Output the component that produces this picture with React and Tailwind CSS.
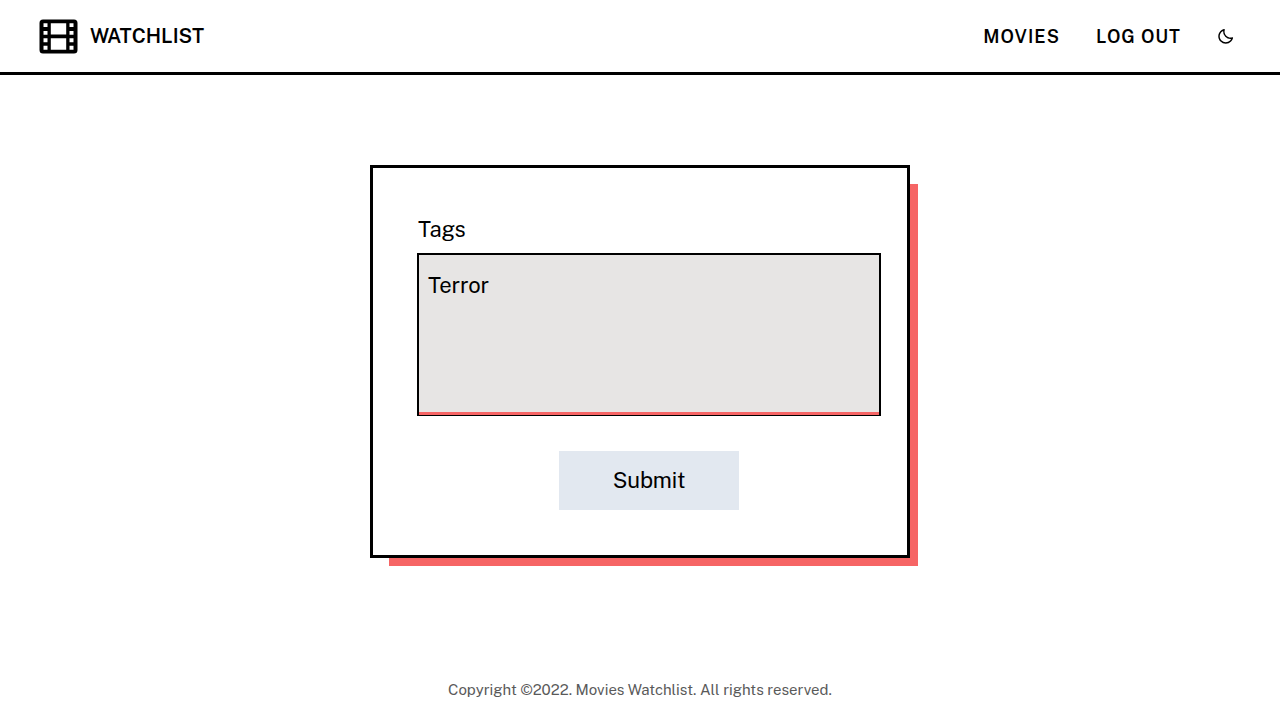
import { BiMoon } from "react-icons/bi";

function FilmIcon() {
  return (
    <svg viewBox="-0.5 -0.5 39 35" className="h-[35px] w-[39px]" aria-hidden="true">
      <path
        fill="currentColor"
        fillRule="evenodd"
        d="M3.5 0H34.5A3.5 3.5 0 0 1 38 3.5V30.5A3.5 3.5 0 0 1 34.5 34H3.5A3.5 3.5 0 0 1 0 30.5V3.5A3.5 3.5 0 0 1 3.5 0ZM11.3 3.8V15H26.7V3.8ZM11.3 18.8V30.2H26.7V18.8ZM4 3.8V7.6H8V3.8ZM4 11.4V15.2H8V11.4ZM4 18.8V22.7H8V18.8ZM4 26.3V30.2H8V26.3ZM30 3.8V7.6H34V3.8ZM30 11.4V15.2H34V11.4ZM30 18.8V22.7H34V18.8ZM30 26.3V30.2H34V26.3Z"
      />
    </svg>
  );
}

export default function App() {
  return (
    <div className="flex h-[720px] flex-col overflow-hidden bg-white font-['Public_Sans','Inter',sans-serif] text-black">
      <header className="flex h-[75px] shrink-0 items-center justify-between border-b-[3px] border-black pr-[45px] pl-[39px]">
        <div className="flex items-center">
          <FilmIcon />
          <span className="ml-3 text-[20px] font-semibold">WATCHLIST</span>
        </div>
        <nav className="flex items-center text-[18px] font-semibold tracking-[1px]">
          <a>MOVIES</a>
          <a className="ml-9">LOG OUT</a>
          <span className="ml-9 pt-px">
            <BiMoon className="size-[18px]" viewBox="0.6 0.6 24 24" />
          </span>
        </nav>
      </header>
      <main className="flex flex-1 flex-col items-center pt-[90px]">
        <form className="h-[393px] w-[540px] border-[3px] border-black bg-white pt-[45px] pl-[44px] shadow-[13.5px_13.5px_0_-5.5px_#f66565]">
          <label className="block h-[40px] pl-px text-[22px] leading-[33px] tracking-[-0.2px]">Tags</label>
          <div className="h-[163px] w-[464px] border-2 border-b border-black bg-[#e7e5e4]">
            <div className="h-40 border-b-[3px] border-[#f66565] px-[9px] pt-[14px] text-[22px] leading-[33px] tracking-[-0.2px]">Terror</div>
          </div>
          <button type="button" className="mt-[35px] ml-[142px] h-[59px] w-[180px] bg-[#e2e8f0] text-[22px] tracking-[-0.2px]">Submit</button>
        </form>
      </main>
      <footer className="h-[41px] text-center text-[15px] text-[#5a5a5a]">Copyright ©2022. Movies Watchlist. All rights reserved.</footer>
    </div>
  );
}
